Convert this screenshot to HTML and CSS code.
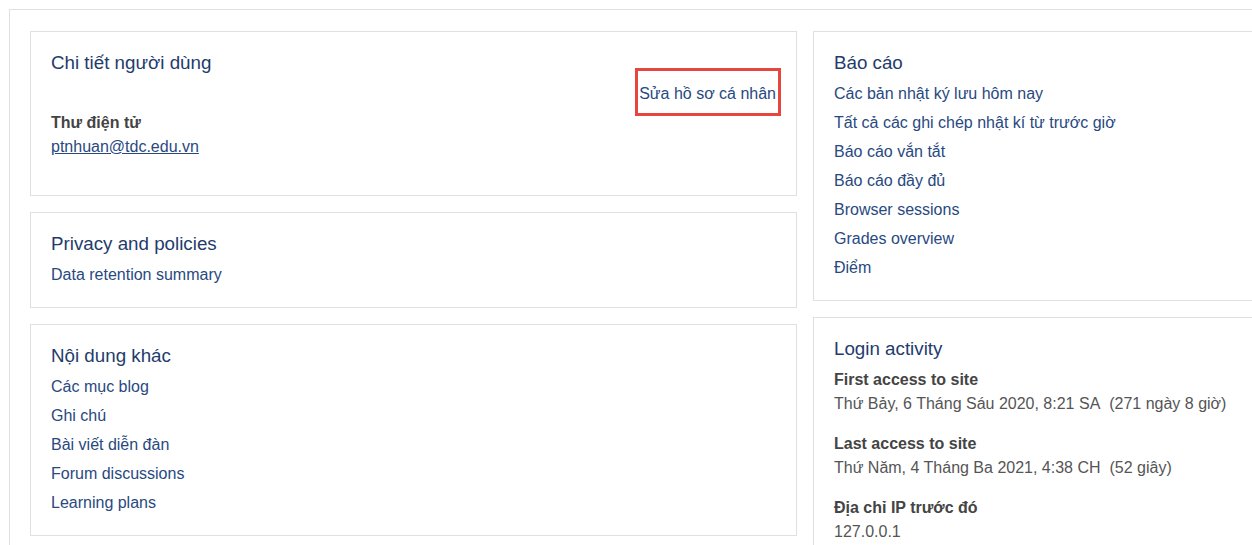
FILE: index.html
```html
<!DOCTYPE html>
<html lang="vi">
<head>
<meta charset="utf-8">
<title>Hồ sơ người dùng</title>
<link rel="stylesheet" href="styles.css">
</head>
<body>
<div class="page">
  <div class="columns">
    <div class="column">
      <section class="card">
        <h5 class="card-title">Chi tiết người dùng</h5>
        <div class="edit-row"><a class="edit-link" href="#">Sửa hồ sơ cá nhân</a></div>
        <dl class="facts">
          <dt>Thư điện tử</dt>
          <dd><a class="mail" href="#">ptnhuan@tdc.edu.vn</a></dd>
        </dl>
      </section>
      <section class="card">
        <h5 class="card-title">Privacy and policies</h5>
        <ul class="links">
          <li><a href="#">Data retention summary</a></li>
        </ul>
      </section>
      <section class="card">
        <h5 class="card-title">Nội dung khác</h5>
        <ul class="links">
          <li><a href="#">Các mục blog</a></li>
          <li><a href="#">Ghi chú</a></li>
          <li><a href="#">Bài viết diễn đàn</a></li>
          <li><a href="#">Forum discussions</a></li>
          <li><a href="#">Learning plans</a></li>
        </ul>
      </section>
    </div>
    <div class="column">
      <section class="card">
        <h5 class="card-title">Báo cáo</h5>
        <ul class="links">
          <li><a href="#">Các bản nhật ký lưu hôm nay</a></li>
          <li><a href="#">Tất cả các ghi chép nhật kí từ trước giờ</a></li>
          <li><a href="#">Báo cáo vắn tắt</a></li>
          <li><a href="#">Báo cáo đầy đủ</a></li>
          <li><a href="#">Browser sessions</a></li>
          <li><a href="#">Grades overview</a></li>
          <li><a href="#">Điểm</a></li>
        </ul>
      </section>
      <section class="card">
        <h5 class="card-title">Login activity</h5>
        <dl class="facts">
          <dt>First access to site</dt>
          <dd>Thứ Bảy, 6 Tháng Sáu 2020, 8:21 SA&nbsp; (271 ngày 8 giờ)</dd>
          <dt>Last access to site</dt>
          <dd>Thứ Năm, 4 Tháng Ba 2021, 4:38 CH&nbsp; (52 giây)</dd>
          <dt>Địa chỉ IP trước đó</dt>
          <dd>127.0.0.1</dd>
        </dl>
      </section>
    </div>
  </div>
</div>
</body>
</html>
```
FILE: styles.css
```css
html, body {
  margin: 0;
  padding: 0;
  overflow: hidden;
  background: #fff;
}
body {
  font-family: "Liberation Sans", Arial, sans-serif;
  font-size: 16px;
  line-height: 24px;
  color: #555;
}
.page {
  margin: 9px 0 0 9px;
  border: 1px solid #e0e0e0;
  padding: 21px 20px;
  width: 1550px;
}
.columns {
  display: grid;
  grid-template-columns: 767px 767px;
  column-gap: 16px;
  align-items: start;
}
.column {
  display: flex;
  flex-direction: column;
  gap: 16px;
}
.card {
  border: 1px solid #e0e0e0;
  padding: 20px;
  background: #fff;
}
.card-title {
  margin: 0 0 7.5px;
  font-size: 18.75px;
  line-height: 22.5px;
  font-weight: normal;
  color: #1f3c6c;
}
a {
  color: #28497f;
  text-decoration: none;
}
.links {
  list-style: none;
  margin: 0;
  padding: 0;
}
.links li + li {
  margin-top: 5px;
}
.edit-row {
  text-align: right;
  margin-bottom: 5px;
}
.edit-link {
  display: inline-block;
  position: relative;
}
.edit-link::after {
  content: "";
  position: absolute;
  left: -4px;
  right: -5px;
  top: -14px;
  bottom: -10px;
  border: 3px solid #e6463e;
}
.facts {
  margin: 0;
}
.facts dt {
  font-weight: bold;
  color: #444;
}
.facts dd {
  margin: 0 0 16px;
  color: #555;
}
.facts dd:last-child {
  margin-bottom: 0;
}
.card:first-child .facts dd:last-child {
  margin-bottom: 16px;
}
.mail {
  text-decoration: underline;
}
```
